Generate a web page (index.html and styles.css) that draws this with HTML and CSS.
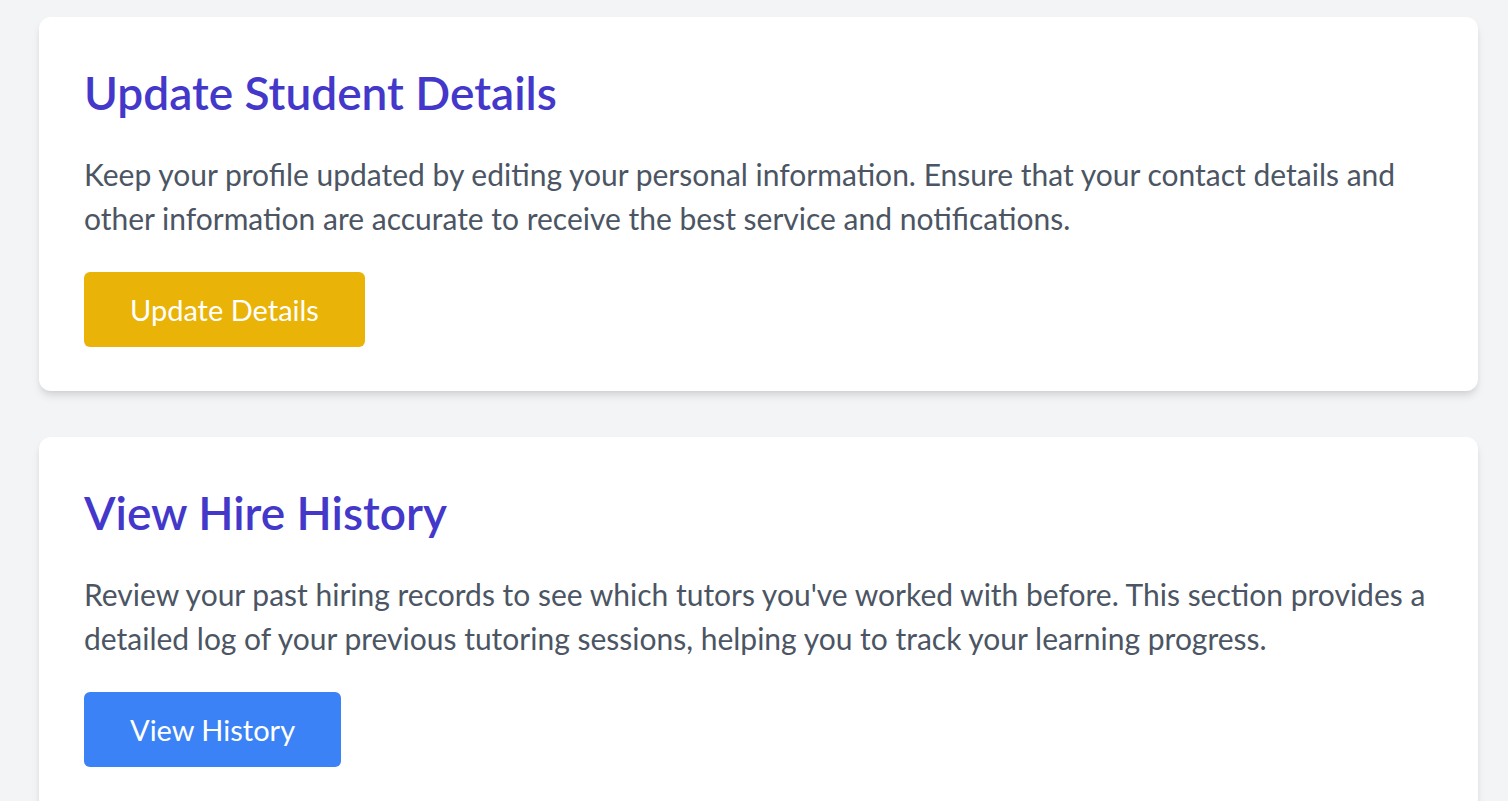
FILE: index.html
```html
<!DOCTYPE html>
<html lang="en">
<head>
<meta charset="utf-8">
<title>Student Dashboard</title>
<link rel="stylesheet" href="styles.css">
</head>
<body>
<main class="page">
  <section class="card">
    <h2 class="card-title">Update Student Details</h2>
    <p class="card-text">Keep your profile updated by editing your personal information. Ensure that your contact details and other information are accurate to receive the best service and notifications.</p>
    <a class="btn btn-yellow" href="#">Update Details</a>
  </section>
  <section class="card">
    <h2 class="card-title">View Hire History</h2>
    <p class="card-text">Review your past hiring records to see which tutors you've worked with before. This section provides a detailed log of your previous tutoring sessions, helping you to track your learning progress.</p>
    <a class="btn btn-blue" href="#">View History</a>
  </section>
</main>
</body>
</html>
```
FILE: styles.css
```css
* { box-sizing: border-box; }
html, body { margin: 0; padding: 0; }
body {
  background: #f3f4f6;
  font-family: "Lato", "Open Sans", sans-serif;
  color: #4b5563;
}
.page {
  display: flex;
  flex-direction: column;
  gap: 46px;
  padding: 17px 0 40px 39px;
}
.card {
  width: 1439px;
  background: #ffffff;
  border-radius: 12px;
  box-shadow: 0 6px 9px -1.5px rgba(0,0,0,0.1), 0 3px 6px -3px rgba(0,0,0,0.1);
  padding: 49px 44px 44px 45px;
  display: flex;
  flex-direction: column;
  align-items: flex-start;
}
.card-title {
  margin: 0 0 32px 0;
  font-size: 46px;
  line-height: 54px;
  font-weight: 600;
  color: #4338ca;
}
.card-text {
  margin: 0 0 32px 0;
  font-size: 30px;
  line-height: 44px;
  color: #4b5563;
}
.btn {
  display: inline-block;
  padding: 16.5px 46px;
  font-size: 29px;
  line-height: 42px;
  color: #ffffff;
  text-decoration: none;
  border-radius: 6px;
}
.btn-yellow { background: #eab308; }
.btn-blue { background: #3b82f6; }
```
